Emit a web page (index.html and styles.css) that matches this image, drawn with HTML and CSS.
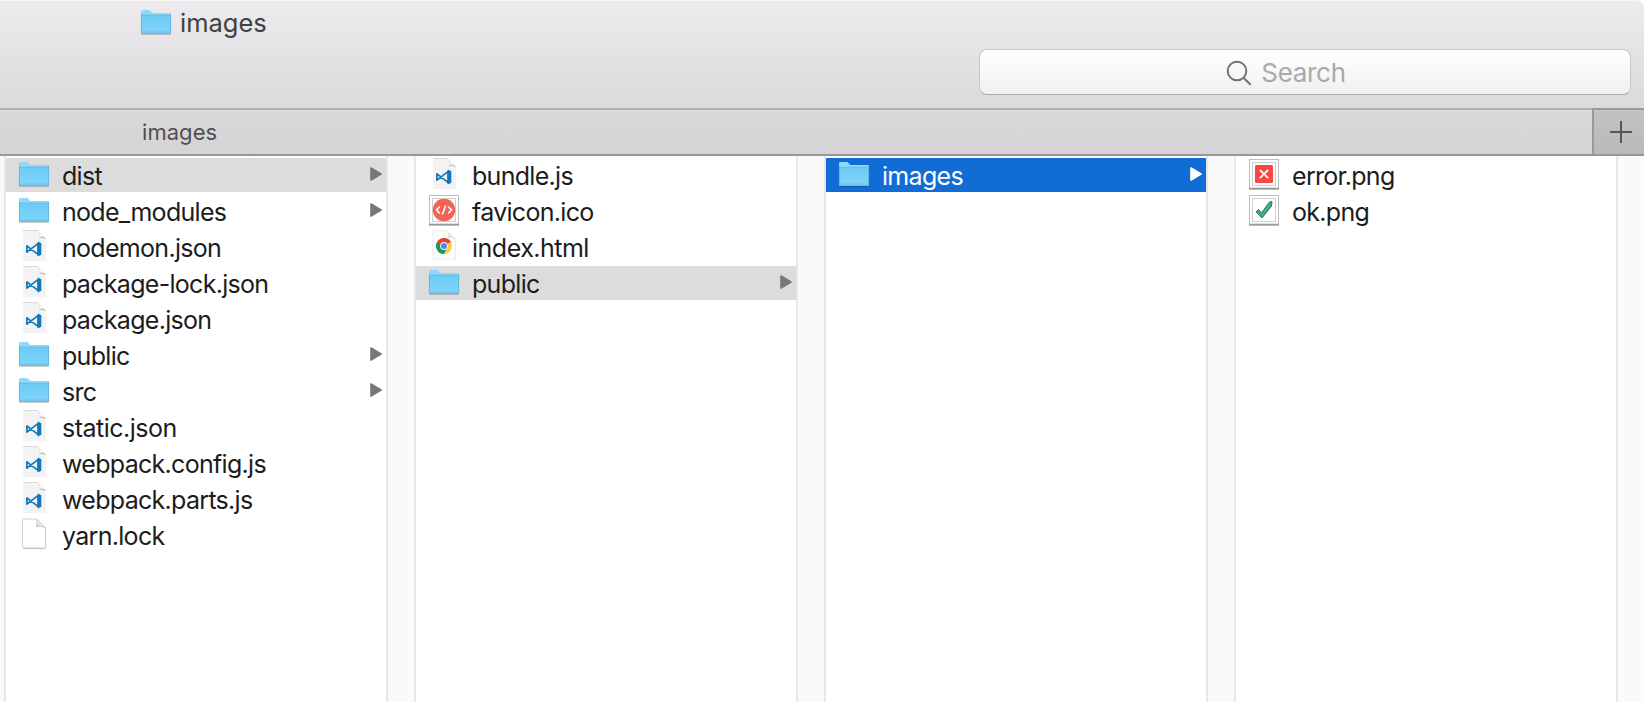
FILE: index.html
```html
<!DOCTYPE html>
<html lang="en">
<head>
<meta charset="utf-8">
<title>images</title>
<link rel="stylesheet" href="styles.css">
</head>
<body>
<svg class="defs" width="0" height="0" aria-hidden="true">
  <defs>
    <linearGradient id="blue" x1="0" y1="0" x2="0" y2="1"><stop offset="0" stop-color="#6ccbf6"/><stop offset="1" stop-color="#82d6fb"/></linearGradient>
    <linearGradient id="fold" x1="0" y1="1" x2="1" y2="0"><stop offset="0" stop-color="#bbb"/><stop offset=".5" stop-color="#f4f4f4"/><stop offset="1" stop-color="#fff"/></linearGradient>
    <symbol id="folder" viewBox="0 0 32 34">
      <path d="M1.5 28.2h29" stroke="#000" stroke-opacity=".22" stroke-width="1.4"/>
      <path d="M1 27V5.200Q1 4 2.200 4H8.700Q9.500 4 10 4.600L11.800 6.600Q12.200 7 13 7H30Q31 7 31 8V27Q31 28 30 28H2Q1 28 1 27Z" fill="#8fd9fb"/>
      <path d="M1 9H31V27Q31 28 30 28H2Q1 28 1 27Z" fill="url(#blue)"/>
      <path d="M1.500 9.200H30.500" stroke="#62b9e2" stroke-width=".8"/>
      <path d="M1.500 26H30.500" stroke="#65bfe8" stroke-width=".7"/>
      <path d="M1.400 8V27.300H30.600V8" fill="none" stroke="#5cb0d8" stroke-width=".8"/>
    </symbol>
    <symbol id="code" viewBox="0 0 32 34">
      <path d="M5 0H20L28 9V31H5Z" fill="#f3f3f3"/>
      <path d="M5 .5H20" stroke="#d9d9d9"/>
      <path d="M19.500 .5Q22.500 2 21.500 7.500Q25.500 6.500 27.500 8.700Z" fill="#fff" stroke="#e1e1e1" stroke-width=".6"/>
      <path d="M21.500 7.500Q25 6.500 27 8.500" fill="none" stroke="#bdbdbd" stroke-width="1.3"/>
      <path d="M20.300 13.300V24.700L8.900 15.800V22.200Z" fill="none" stroke="#1277bd" stroke-width="1.700" stroke-linejoin="round"/>
      <path d="M19.300 12.500L20.500 11.800L23.300 13.300V24.700L20.500 26.200L19.300 25.500Z" fill="#1277bd"/>
    </symbol>
    <symbol id="blank" viewBox="0 0 32 34">
      <path d="M5.500 1H18.500L27.500 10V30H5.500Q4.500 30 4.500 29V2Q4.500 1 5.500 1Z" fill="#fff" stroke="#cfcfcf"/>
      <path d="M5 30.600H27" stroke="#c1c1c1"/>
      <path d="M18.500 1Q19.500 3 18.500 8.500Q24 7.500 27.300 10Z" fill="url(#fold)" stroke="#c5c5c5" stroke-width=".8"/>
    </symbol>
    <symbol id="frame" viewBox="0 0 32 34">
      <path d="M1 30.700H31" stroke="#777" stroke-width="1.600"/>
      <rect x="1.500" y="1.500" width="29" height="28.500" fill="#fff" stroke="#bdbdbd"/>
      <rect x="4.500" y="4.500" width="23" height="23" fill="#fff" stroke="#cecece"/>
    </symbol>
    <symbol id="favicon" viewBox="0 0 32 34">
      <use href="#frame"/>
      <circle cx="16" cy="16" r="11.200" fill="#f16353"/>
      <path d="M11.800 12.500L8.500 16L11.800 19.500M17.700 11.500L14.300 20.500M20.200 12.500L23.500 16L20.200 19.500" fill="none" stroke="#fff" stroke-width="1.600"/>
    </symbol>
    <symbol id="chrome" viewBox="0 0 32 34">
      <path d="M5 1H19L27.500 9V29H5Z" fill="#fdfdfd" stroke="#ebebeb"/>
      <path d="M19 1Q21 3 20 8Q25 7 27.500 9Z" fill="url(#fold)" stroke="#e3e3e3" stroke-width=".6"/>
      <path d="M16 16L9.200 12.100A7.800 7.800 0 0 1 22.800 12.100Z" fill="#dc4437"/>
      <path d="M16 16L9.200 12.100A7.800 7.800 0 0 0 16 23.800Z" fill="#179c58"/>
      <path d="M16 16L22.800 12.100A7.800 7.800 0 0 1 16 23.800Z" fill="#fdcb3f"/>
      <path d="M16 12.300H22.900L22.700 11.900L21 9.900L16 8.200L9.200 12.100L12.800 18.100Z" fill="#dc4437"/>
      <path d="M9.100 12.200L12.700 18.100L16 19.900L19.100 18L16 23.800Q8.500 23.500 8.200 16Q8.200 14 9.100 12.200Z" fill="#179c58"/>
      <circle cx="16" cy="16" r="3.900" fill="#f5f5f5"/><circle cx="16" cy="16" r="3" fill="#4a89f3"/>
    </symbol>
    <symbol id="error" viewBox="0 0 32 34">
      <use href="#frame"/>
      <rect x="7" y="7" width="18" height="18" rx="1.500" fill="#f9463e"/>
      <path d="M11.800 11.800L20.200 20.200M20.200 11.800L11.800 20.200" stroke="#fff" stroke-width="1.900"/>
    </symbol>
    <symbol id="ok" viewBox="0 0 32 34">
      <use href="#frame"/>
      <path d="M8 17.800L10.500 15.500L13.500 19L21.500 8L24 7.500L23.500 12L14 24Z" fill="#35b779" stroke="#3b554a" stroke-width=".9" stroke-linejoin="round"/>
    </symbol>
    <symbol id="arrow" viewBox="0 0 12 14"><path d="M1 1L11 7L1 13Z" fill="currentColor" stroke="currentColor" stroke-width="1.600" stroke-linejoin="round"/></symbol>
  </defs>
</svg>
<div class="window">
  <header class="toolbar">
    <div class="title"><svg class="icon"><use href="#folder"/></svg><span>images</span></div>
    <div class="search">
      <svg class="glass" viewBox="0 0 26 26"><circle cx="11" cy="11" r="9.300"/><path d="M17.500 17.700L24.700 24.700"/></svg>
      <span>Search</span>
    </div>
  </header>
  <div class="tabs">
    <div class="tab">images</div>
    <div class="add"><svg width="22" height="22"><path d="M0 11H22M11 0V22"/></svg></div>
  </div>
  <main class="columns">
    <ul class="column">
      <li class="row selected"><svg class="icon"><use href="#folder"/></svg><span>dist</span><svg class="arrow"><use href="#arrow"/></svg></li>
      <li class="row"><svg class="icon"><use href="#folder"/></svg><span>node_modules</span><svg class="arrow"><use href="#arrow"/></svg></li>
      <li class="row"><svg class="icon"><use href="#code"/></svg><span>nodemon.json</span></li>
      <li class="row"><svg class="icon"><use href="#code"/></svg><span>package-lock.json</span></li>
      <li class="row"><svg class="icon"><use href="#code"/></svg><span>package.json</span></li>
      <li class="row"><svg class="icon"><use href="#folder"/></svg><span>public</span><svg class="arrow"><use href="#arrow"/></svg></li>
      <li class="row"><svg class="icon"><use href="#folder"/></svg><span>src</span><svg class="arrow"><use href="#arrow"/></svg></li>
      <li class="row loose"><svg class="icon"><use href="#code"/></svg><span>static.json</span></li>
      <li class="row"><svg class="icon"><use href="#code"/></svg><span>webpack.config.js</span></li>
      <li class="row"><svg class="icon"><use href="#code"/></svg><span>webpack.parts.js</span></li>
      <li class="row"><svg class="icon"><use href="#blank"/></svg><span>yarn.lock</span></li>
    </ul>
    <ul class="column">
      <li class="row"><svg class="icon"><use href="#code"/></svg><span>bundle.js</span></li>
      <li class="row"><svg class="icon"><use href="#favicon"/></svg><span>favicon.ico</span></li>
      <li class="row loose"><svg class="icon"><use href="#chrome"/></svg><span>index.html</span></li>
      <li class="row selected"><svg class="icon"><use href="#folder"/></svg><span>public</span><svg class="arrow"><use href="#arrow"/></svg></li>
    </ul>
    <ul class="column">
      <li class="row active"><svg class="icon"><use href="#folder"/></svg><span>images</span><svg class="arrow"><use href="#arrow"/></svg></li>
    </ul>
    <ul class="column">
      <li class="row"><svg class="icon"><use href="#error"/></svg><span>error.png</span></li>
      <li class="row"><svg class="icon"><use href="#ok"/></svg><span>ok.png</span></li>
    </ul>
  </main>
</div>
</body>
</html>
```
FILE: styles.css
```css
* { box-sizing: border-box; }
body { margin: 0; background: #fff; font-family: Inter, "Liberation Sans", sans-serif; color: #1c1c1c; }
.defs { position: absolute; }
.window { display: flex; flex-direction: column; width: 1644px; height: 702px; overflow: hidden; }
.toolbar {
  height: 110px; flex: none;
  display: flex; flex-direction: column;
  padding: 5px 13px 0 140px;
  background: linear-gradient(#edebee, #dbd9dc);
  border-top: 1px solid #f7f6f7;
  border-bottom: 2px solid #b1afb2;
  border-top-right-radius: 7px;
}
.icon { width: 32px; height: 34px; flex: none; display: block; }
.title { display: flex; height: 34px; gap: 8px; font-size: 25.500px; line-height: 34px; color: #414042; }
.title span { letter-spacing: 0; }
.search {
  width: 652px; height: 46px; margin-top: 9px; padding: 2px 38px 0 0;
  align-self: flex-end;
  display: flex; align-items: center; justify-content: center; gap: 9px;
  background: linear-gradient(#fff, #f0f0f0);
  border: 1px solid #c9c7ca; border-bottom-color: #a9a7aa; border-radius: 8px;
  color: #aaa; font-size: 26px; line-height: 42px; letter-spacing: -0.300px;
}
.glass { width: 26px; height: 26px; fill: none; stroke: #707070; stroke-width: 1.900; }
.tabs { height: 46px; flex: none; display: flex; background: linear-gradient(#dad8db, #d5d3d6); border-bottom: 2px solid #99979a; }
.tab { flex: 1; padding-left: 142px; font-size: 22px; line-height: 44px; color: #505050; letter-spacing: 0.05px; }
.add {
  width: 52px; height: 46px; margin-top: -2px;
  display: flex; align-items: center; justify-content: center; padding-left: 4px;
  background: linear-gradient(#c2c1c3, #bababa);
  border-left: 2px solid #999; border-top: 2px solid #999;
}
.add path { stroke: #555; stroke-width: 2; }
.columns { flex: 1; display: flex; gap: 26px; padding-left: 4px; background: #fafafa; }
.column {
  width: 384px; flex: none; margin: 0; padding: 2px 0 0;
  display: flex; flex-direction: column; gap: 2px;
  list-style: none; background: #fff;
  border: solid #e8e8e8; border-width: 0 2px;
}
.row { height: 34px; display: flex; padding: 0 4px 0 12px; font-size: 25px; line-height: 36px; letter-spacing: -0.700px; white-space: nowrap; }
.loose { letter-spacing: -0.500px; }
.row span { margin-left: 12px; }
.arrow { width: 12px; height: 14px; margin: 9px 0 0 auto; color: #777; }
.selected { background: #dcdcdc; }
.active { background: #116cd6; color: #fff; }
.active .arrow { color: #fff; }
```
